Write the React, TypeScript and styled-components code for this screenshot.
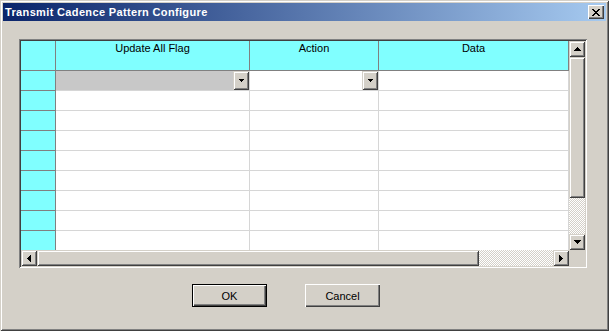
import React from 'react';
import styled, { createGlobalStyle, css } from 'styled-components';

const GlobalStyle = createGlobalStyle`
  html, body {
    margin: 0;
    padding: 0;
    background: #d4d0c8;
  }
  body {
    font-family: "Liberation Sans", Arial, sans-serif;
    font-size: 11px;
    color: #000;
  }
`;

const raised = css`
  background: #d4d0c8;
  box-shadow: inset 1px 1px #d4d0c8, inset -1px -1px #404040, inset 2px 2px #fff,
    inset -2px -2px #808080;
`;

const Window = styled.div`
  width: 609px;
  height: 331px;
  box-sizing: border-box;
  padding: 3px;
  display: flex;
  flex-direction: column;
  background: #d4d0c8;
  box-shadow: inset 1px 1px #d4d0c8, inset -1px -1px #404040, inset 2px 2px #fff,
    inset -2px -2px #808080;
`;

const TitleBar = styled.div`
  height: 18px;
  display: flex;
  align-items: center;
  justify-content: space-between;
  padding: 0 2px;
  background: linear-gradient(to right, #0a246a, #a6caf0);
`;

const Title = styled.span`
  color: #fff;
  font-weight: bold;
  font-size: 11px;
  line-height: 13px;
  letter-spacing: 0.35px;
`;

const CloseButton = styled.div`
  ${raised};
  width: 16px;
  height: 14px;
  display: flex;
  align-items: center;
  justify-content: center;
  box-shadow: inset 1px 1px #fff, inset -1px -1px #404040, inset -2px -2px #808080;
`;

const Body = styled.div`
  display: flex;
  flex-direction: column;
  padding: 18px 0 0 16px;
`;

const Frame = styled.div`
  width: 568px;
  height: 229px;
  box-sizing: border-box;
  padding: 2px;
  box-shadow: inset 1px 1px #808080, inset -1px -1px #fff, inset 2px 2px #404040,
    inset -2px -2px #d4d0c8;
  display: grid;
  grid-template-columns: 548px 16px;
  grid-template-rows: 209px 16px;
`;

const Table = styled.div`
  overflow: hidden;
  display: grid;
  grid-template-columns: 35px 194px 129px 190px;
  grid-template-rows: 30px repeat(9, 20px);
  background: #fff;
`;

type CellKind = 'corner' | 'colhead' | 'rowhead' | 'data' | 'selected';

const Cell = styled.div<{ $kind: CellKind }>`
  box-sizing: border-box;
  display: flex;
  justify-content: ${(p) => (p.$kind === 'colhead' ? 'center' : 'flex-end')};
  align-items: flex-start;
  padding-top: ${(p) => (p.$kind === 'colhead' ? '1px' : '0')};
  line-height: 13px;
  background: ${(p) =>
    p.$kind === 'data' ? '#fff' : p.$kind === 'selected' ? '#c8c8c8' : '#80ffff'};
  border-right: 1px solid
    ${(p) => (p.$kind === 'data' || p.$kind === 'selected' ? '#d6d6d6' : '#808080')};
  border-bottom: 1px solid
    ${(p) => (p.$kind === 'data' || p.$kind === 'selected' ? '#d6d6d6' : '#808080')};
`;

const ComboButton = styled.div`
  ${raised};
  width: 16px;
  height: 19px;
  display: flex;
  align-items: center;
  justify-content: center;
`;

const VScroll = styled.div`
  display: flex;
  flex-direction: column;
  background: #d4d0c8;
`;

const HScroll = styled.div`
  display: flex;
  background: #d4d0c8;
`;

const ScrollButton = styled.div`
  ${raised};
  width: 16px;
  height: 16px;
  flex: none;
  display: flex;
  align-items: center;
  justify-content: center;
`;

const Thumb = styled.div<{ $size: number; $vertical?: boolean }>`
  ${raised};
  flex: none;
  ${(p) => (p.$vertical ? `height: ${p.$size}px;` : `width: ${p.$size}px;`)}
`;

const Track = styled.div`
  flex: 1;
  background-image: conic-gradient(#fff 25%, #d4d0c8 0 50%, #fff 0 75%, #d4d0c8 0);
  background-size: 2px 2px;
`;

const Corner = styled.div`
  background: #d4d0c8;
`;

const ButtonRow = styled.div`
  display: flex;
  gap: 38px;
  padding: 16px 0 0 173px;
`;

const PushButton = styled.div<{ $default?: boolean }>`
  width: 75px;
  height: 23px;
  box-sizing: border-box;
  display: flex;
  align-items: center;
  justify-content: center;
  background: #d4d0c8;
  font-size: 11px;
  ${(p) =>
    p.$default
      ? css`
          box-shadow: inset 0 0 0 1px #000, inset 2px 2px #fff, inset -2px -2px #404040,
            inset -3px -3px #808080;
        `
      : css`
          box-shadow: inset 1px 1px #fff, inset -1px -1px #404040, inset -2px -2px #808080;
        `}
`;

type Dir = 'up' | 'down' | 'left' | 'right';

const Arrow = ({ dir, size = 4 }: { dir: Dir; size?: number }) => {
  const span = size * 2 - 1;
  const vertical = dir === 'up' || dir === 'down';
  const rects = [];
  for (let i = 0; i < size; i++) {
    const len = i * 2 + 1;
    const off = size - 1 - i;
    const pos = dir === 'up' || dir === 'left' ? i : size - 1 - i;
    rects.push(
      vertical ? (
        <rect key={i} x={off} y={pos} width={len} height={1} />
      ) : (
        <rect key={i} x={pos} y={off} width={1} height={len} />
      )
    );
  }
  return (
    <svg
      width={vertical ? span : size}
      height={vertical ? size : span}
      shapeRendering="crispEdges"
      fill="#000"
    >
      {rects}
    </svg>
  );
};

const closeGlyph = ['11....11', '.11..11.', '..1111..', '...11...', '..1111..', '.11..11.', '11....11'];

const CloseIcon = () => (
  <svg width={8} height={7} shapeRendering="crispEdges" fill="#000">
    {closeGlyph.flatMap((row, y) =>
      row.split('').map((c, x) => (c === '1' ? <rect key={`${x}-${y}`} x={x} y={y} width={1} height={1} /> : null))
    )}
  </svg>
);

const columns = ['Update All Flag', 'Action', 'Data'];
const rowCount = 9;

export default function App() {
  return (
    <>
      <GlobalStyle />
      <Window>
        <TitleBar>
          <Title>Transmit Cadence Pattern Configure</Title>
          <CloseButton>
            <CloseIcon />
          </CloseButton>
        </TitleBar>
        <Body>
          <Frame>
            <Table>
              <Cell $kind="corner" />
              {columns.map((c) => (
                <Cell key={c} $kind="colhead">
                  {c}
                </Cell>
              ))}
              {Array.from({ length: rowCount }).map((_, r) => (
                <React.Fragment key={r}>
                  <Cell $kind="rowhead" />
                  <Cell $kind={r === 0 ? 'selected' : 'data'}>
                    {r === 0 && (
                      <ComboButton>
                        <Arrow dir="down" size={3} />
                      </ComboButton>
                    )}
                  </Cell>
                  <Cell $kind="data">
                    {r === 0 && (
                      <ComboButton>
                        <Arrow dir="down" size={3} />
                      </ComboButton>
                    )}
                  </Cell>
                  <Cell $kind="data" />
                </React.Fragment>
              ))}
            </Table>
            <VScroll>
              <ScrollButton>
                <Arrow dir="up" />
              </ScrollButton>
              <Thumb $vertical $size={141} />
              <Track />
              <ScrollButton>
                <Arrow dir="down" />
              </ScrollButton>
            </VScroll>
            <HScroll>
              <ScrollButton>
                <Arrow dir="left" />
              </ScrollButton>
              <Thumb $size={442} />
              <Track />
              <ScrollButton>
                <Arrow dir="right" />
              </ScrollButton>
            </HScroll>
            <Corner />
          </Frame>
          <ButtonRow>
            <PushButton $default>OK</PushButton>
            <PushButton>Cancel</PushButton>
          </ButtonRow>
        </Body>
      </Window>
    </>
  );
}
